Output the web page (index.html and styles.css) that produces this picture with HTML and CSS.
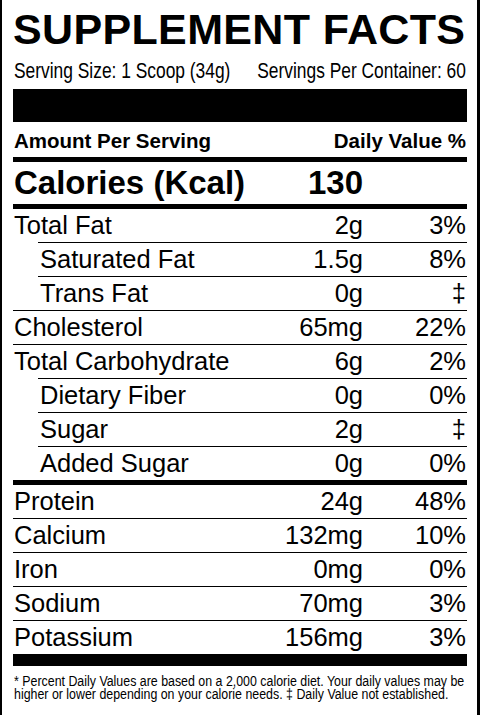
FILE: index.html
```html
<!DOCTYPE html>
<html lang="en">
<head>
<meta charset="utf-8">
<title>Supplement Facts</title>
<link rel="stylesheet" href="styles.css">
</head>
<body>
<div class="label">
  <h1 class="title">SUPPLEMENT FACTS</h1>
  <div class="serving">
    <div class="serving-inner"><span>Serving Size: 1 Scoop (34g)</span><span>Servings Per Container: 60</span></div>
  </div>
  <div class="bar"></div>
  <div class="head"><span>Amount Per Serving</span><span>Daily Value %</span></div>
  <div class="grid cal"><span class="name">Calories (Kcal)</span><span class="amt">130</span><span class="dv"></span></div>
  <div class="rows">
    <div class="grid row first"><span class="name">Total Fat</span><span class="amt">2g</span><span class="dv">3%</span></div>
    <div class="grid row sub"><span class="name">Saturated Fat</span><span class="amt">1.5g</span><span class="dv">8%</span></div>
    <div class="grid row sub"><span class="name">Trans Fat</span><span class="amt">0g</span><span class="dv">‡</span></div>
    <div class="grid row"><span class="name">Cholesterol</span><span class="amt">65mg</span><span class="dv">22%</span></div>
    <div class="grid row"><span class="name">Total Carbohydrate</span><span class="amt">6g</span><span class="dv">2%</span></div>
    <div class="grid row sub"><span class="name">Dietary Fiber</span><span class="amt">0g</span><span class="dv">0%</span></div>
    <div class="grid row sub"><span class="name">Sugar</span><span class="amt">2g</span><span class="dv">‡</span></div>
    <div class="grid row sub"><span class="name">Added Sugar</span><span class="amt">0g</span><span class="dv">0%</span></div>
    <div class="grid row thick"><span class="name">Protein</span><span class="amt">24g</span><span class="dv">48%</span></div>
    <div class="grid row"><span class="name">Calcium</span><span class="amt">132mg</span><span class="dv">10%</span></div>
    <div class="grid row"><span class="name">Iron</span><span class="amt">0mg</span><span class="dv">0%</span></div>
    <div class="grid row"><span class="name">Sodium</span><span class="amt">70mg</span><span class="dv">3%</span></div>
    <div class="grid row"><span class="name">Potassium</span><span class="amt">156mg</span><span class="dv">3%</span></div>
  </div>
  <div class="bottom-bar"></div>
  <div class="note-wrap">
    <p class="note">* Percent Daily Values are based on a 2,000 calorie diet. Your daily values may be<br>higher or lower depending on your calorie needs. ‡ Daily Value not established.</p>
  </div>
</div>
</body>
</html>
```

FILE: styles.css
```css
html, body {
  margin: 0;
  padding: 0;
  background: #fff;
}

body {
  font-family: "Liberation Sans", Arial, sans-serif;
  color: #000;
}

.label {
  box-sizing: border-box;
  width: 480px;
  height: 715px;
  overflow: hidden;
  border-left: 2px solid #000;
  border-right: 3px solid #000;
  padding: 0 10px 0 11px;
}

.title {
  margin: 0;
  padding-top: 6px;
  font-size: 43px;
  line-height: 46px;
  font-weight: 700;
  letter-spacing: 0.35px;
  white-space: nowrap;
}

.serving {
  padding: 6px 1px 0 1px;
  height: 26px;
}

.serving-inner {
  display: flex;
  justify-content: space-between;
  width: 572px;
  font-size: 22px;
  line-height: 26px;
  white-space: nowrap;
  transform: scaleX(0.79);
  transform-origin: left top;
}

.bar {
  margin-top: 5px;
  height: 33px;
  background: #000;
}

.head {
  display: flex;
  justify-content: space-between;
  padding: 2px 1px 0 1px;
  font-size: 20.5px;
  line-height: 33px;
  font-weight: 700;
}

.grid {
  display: grid;
  grid-template-columns: 1fr 110px 104px;
  align-items: baseline;
}

.grid .name {
  padding-left: 1px;
  white-space: nowrap;
}

.grid .amt {
  text-align: right;
}

.grid .dv {
  text-align: right;
  padding-right: 1px;
}

.cal {
  border-top: 5px solid #000;
  font-size: 33px;
  line-height: 42px;
  font-weight: 700;
}

.rows {
  border-top: 5px solid #000;
}

.row {
  font-size: 25.5px;
  line-height: 33px;
  border-top: 1px solid #000;
}

.row.first {
  border-top: none;
}

.row.sub {
  margin-left: 25px;
}

.row.sub .name {
  padding-left: 2px;
}

.row.thick {
  border-top: 5px solid #000;
}

.bottom-bar {
  height: 12px;
  background: #000;
}

.note-wrap {
  padding: 9px 1px 0 1px;
}

.note {
  display: inline-block;
  margin: 0;
  font-size: 14px;
  line-height: 13px;
  white-space: nowrap;
  transform: scaleX(0.885);
  transform-origin: left top;
}
```
